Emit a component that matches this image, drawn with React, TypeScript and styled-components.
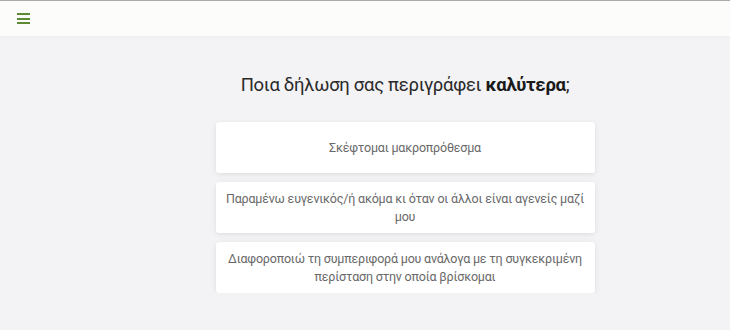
import styled, { createGlobalStyle } from 'styled-components'

const GlobalStyle = createGlobalStyle`
  html, body {
    margin: 0;
    padding: 0;
    background: #f3f2f5;
    font-family: Roboto, "Noto Sans", sans-serif;
  }
`

const StyledHeader = styled.header`
  height: 35px;
  border-top: 1px solid #a9aaa6;
  background: #fcfdfb;
  display: flex;
  align-items: center;
  padding-left: 17px;
  box-shadow: 0 1px 3px rgba(0, 0, 0, 0.04);
`
const StyledMenuButton = styled.button`
  border: none;
  background: none;
  padding: 0;
  width: 13px;
  height: 11px;
  display: flex;
  flex-direction: column;
  justify-content: space-between;
  cursor: pointer;
  span {
    display: block;
    height: 2px;
    background: #5e8a33;
  }
`
const StyledMain = styled.main`
  padding: 38px 0 0 80px;
  display: flex;
  flex-direction: column;
  align-items: center;
`
const StyledTitle = styled.h1`
  margin: 0 0 26px;
  font-size: 18.5px;
  letter-spacing: -0.3px;
  font-weight: 400;
  color: #2a2a2a;
  b {
    font-weight: 700;
    color: #1a1a1a;
  }
`
const StyledOptions = styled.div`
  width: 379px;
  display: flex;
  flex-direction: column;
  gap: 9px;
`
const StyledOption = styled.button`
  min-height: 51px;
  padding: 7px 6px;
  border: none;
  border-radius: 3px;
  background: #ffffff;
  box-shadow: 0 1px 4px rgba(0, 0, 0, 0.06), 0 2px 8px rgba(0, 0, 0, 0.04);
  font-family: inherit;
  font-size: 12.5px;
  letter-spacing: -0.2px;
  line-height: 18px;
  color: #696969;
  text-align: center;
  cursor: pointer;
`

const options = [
  'Σκέφτομαι μακροπρόθεσμα',
  'Παραμένω ευγενικός/ή ακόμα κι όταν οι άλλοι είναι αγενείς μαζί μου',
  'Διαφοροποιώ τη συμπεριφορά μου ανάλογα με τη συγκεκριμένη περίσταση στην οποία βρίσκομαι',
]

export default function App() {
  return (
    <>
      <GlobalStyle />
      <StyledHeader>
        <StyledMenuButton aria-label="menu">
          <span />
          <span />
          <span />
        </StyledMenuButton>
      </StyledHeader>
      <StyledMain>
        <StyledTitle>
          Ποια δήλωση σας περιγράφει <b>καλύτερα</b>;
        </StyledTitle>
        <StyledOptions>
          {options.map((text) => (
            <StyledOption key={text}>{text}</StyledOption>
          ))}
        </StyledOptions>
      </StyledMain>
    </>
  )
}
